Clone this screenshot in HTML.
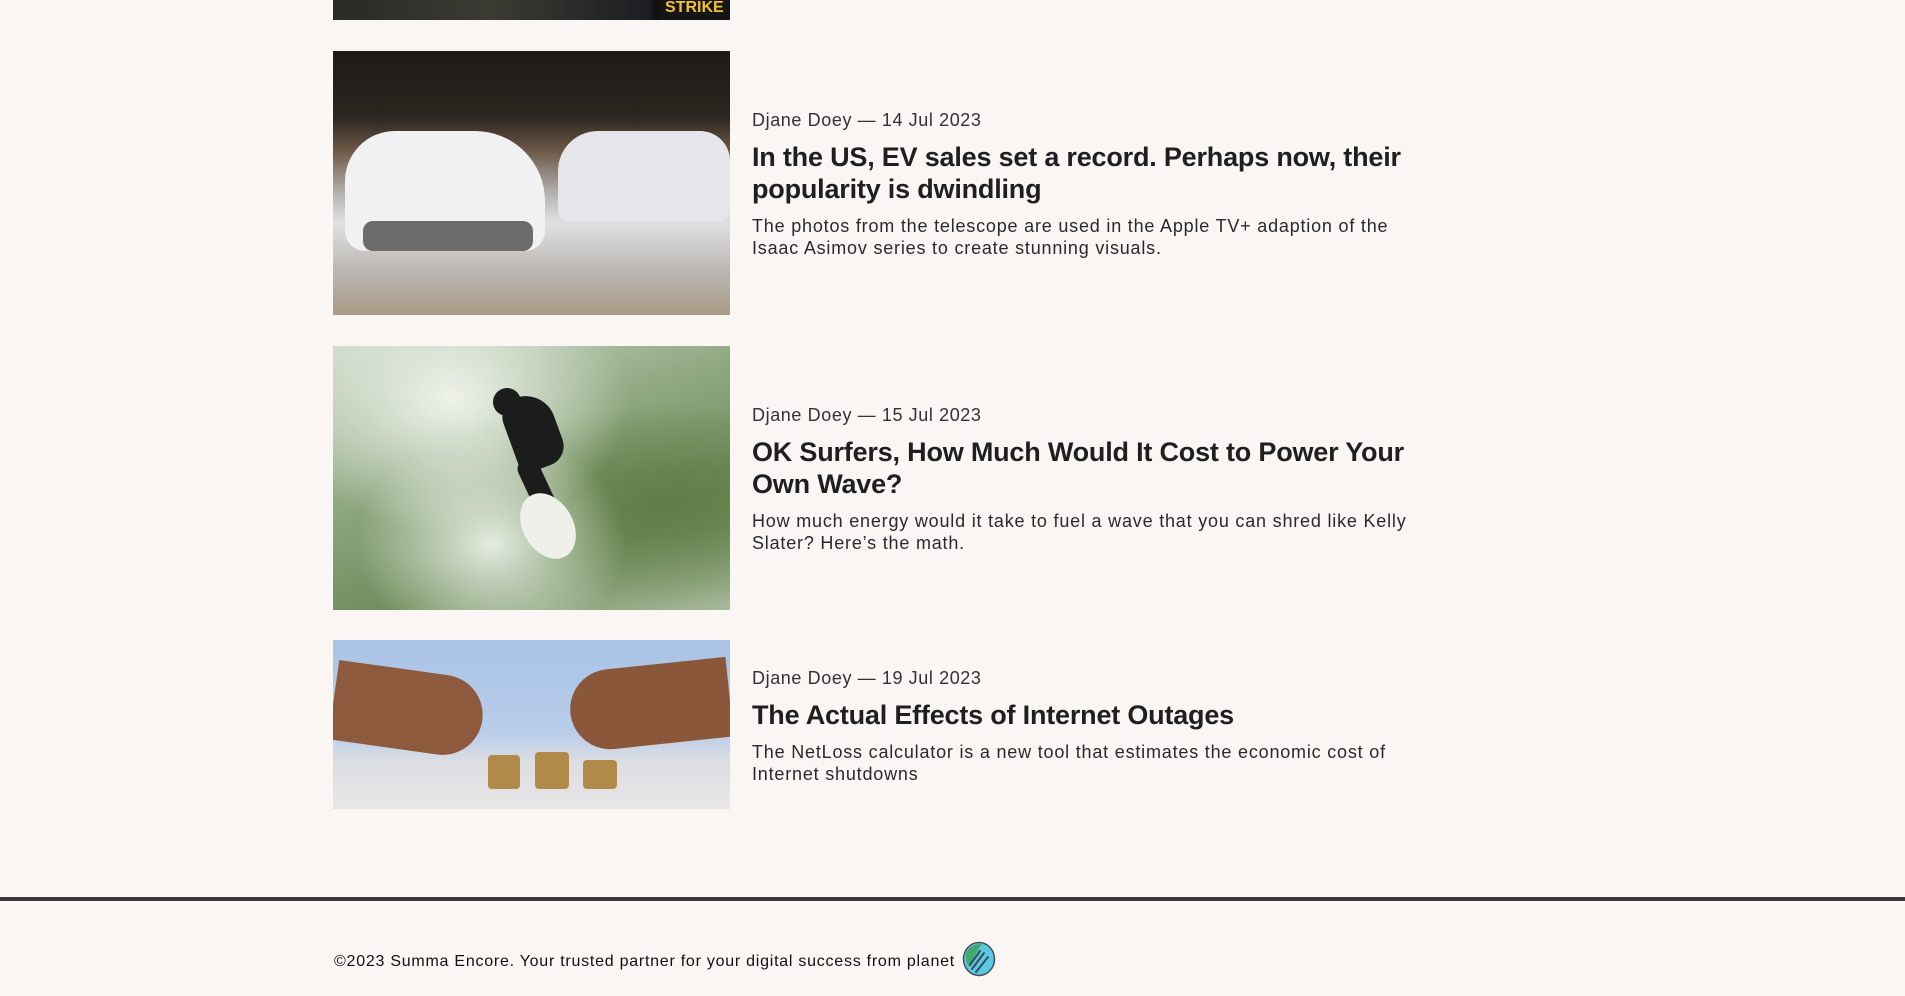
<!DOCTYPE html>
<html><head><meta charset="utf-8"><style>
html,body{margin:0;padding:0;background:#f9f6f3;width:1905px;height:996px;overflow:hidden;font-family:"Liberation Sans",sans-serif;color:#222;}
.img{position:absolute;left:333px;width:397px;overflow:hidden;}
.txt{position:absolute;left:752px;width:680px;}
.meta{font-size:18px;color:#333;line-height:22px;letter-spacing:0.6px;}
.t{font-size:27px;font-weight:bold;line-height:32px;color:#1f1f22;margin-top:10px;letter-spacing:-0.2px;}
.d{font-size:18px;line-height:22px;color:#2a2a2a;margin-top:10px;letter-spacing:0.8px;width:665px;}
</style></head><body>
<div class="img" style="top:0;height:20px;background:linear-gradient(90deg,#2a2a26 0%,#3b3a33 40%,#1c1d22 80%,#111 81%,#111 100%);"></div>
<div style="position:absolute;left:660px;top:0;width:70px;height:20px;background:#151515;color:#f2c230;font-weight:bold;font-size:16px;line-height:16px;padding-left:5px;box-sizing:border-box;">STRIKE</div>

<div class="img" style="top:51px;height:264px;background:linear-gradient(180deg,#1d1a18 0%,#2c2520 25%,#6e5a48 38%,#b9b7b5 55%,#e0e0e2 65%,#b7b3ad 85%,#a99a86 100%);">
<div style="position:absolute;left:12px;top:80px;width:200px;height:120px;background:#f1f1f3;border-radius:50px 70px 20px 20px;"></div>
<div style="position:absolute;left:225px;top:80px;width:172px;height:90px;background:#e6e6ea;border-radius:40px 30px 10px 10px;"></div>
<div style="position:absolute;left:30px;top:170px;width:170px;height:30px;background:#333;border-radius:10px;opacity:.7"></div>
</div>
<div class="txt" style="top:109px;"><div class="meta">Djane Doey — 14 Jul 2023</div><div class="t">In the US, EV sales set a record. Perhaps now, their popularity is dwindling</div><div class="d">The photos from the telescope are used in the Apple TV+ adaption of the Isaac Asimov series to create stunning visuals.</div></div>

<div class="img" style="top:346px;height:264px;background:radial-gradient(ellipse at 30% 20%,#eef2ea 0%,rgba(220,230,215,0) 45%),radial-gradient(ellipse at 40% 75%,#e4ebe0 0%,rgba(220,230,215,0) 40%),radial-gradient(ellipse at 85% 60%,#5f7d45 0%,rgba(95,125,69,0) 45%),linear-gradient(160deg,#c9d6c4 0%,#8da77f 40%,#6f8d5c 70%,#a7b99a 100%);">
<div style="position:absolute;left:160px;top:42px;width:28px;height:28px;background:#1a1d1c;border-radius:50%;"></div>
<div style="position:absolute;left:175px;top:48px;width:50px;height:75px;background:#1a1d1c;border-radius:20px 30px 20px 10px;transform:rotate(-20deg);"></div>
<div style="position:absolute;left:195px;top:110px;width:22px;height:70px;background:#1a1d1c;border-radius:10px;transform:rotate(-25deg);"></div>
<div style="position:absolute;left:190px;top:145px;width:50px;height:70px;background:#f0f0ea;border-radius:50%;transform:rotate(-30deg);"></div>
</div>
<div class="txt" style="top:404px;"><div class="meta">Djane Doey — 15 Jul 2023</div><div class="t">OK Surfers, How Much Would It Cost to Power Your Own Wave?</div><div class="d">How much energy would it take to fuel a wave that you can shred like Kelly Slater? Here’s the math.</div></div>

<div class="img" style="top:640px;height:169px;background:linear-gradient(180deg,#a9c3e6 0%,#b8cde9 55%,#dcdde2 72%,#e8e6e6 100%);">
<div style="position:absolute;left:0;top:30px;width:150px;height:80px;background:#8e5a3e;border-radius:0 60px 60px 0;transform:rotate(8deg);"></div>
<div style="position:absolute;left:237px;top:25px;width:160px;height:80px;background:#8a573b;border-radius:60px 0 0 60px;transform:rotate(-6deg);"></div>
<div style="position:absolute;left:155px;top:115px;width:32px;height:34px;background:#b08a48;border-radius:4px;"></div>
<div style="position:absolute;left:202px;top:112px;width:34px;height:37px;background:#b08a48;border-radius:4px;"></div>
<div style="position:absolute;left:250px;top:120px;width:34px;height:29px;background:#b08a48;border-radius:4px;"></div>
</div>
<div class="txt" style="top:667px;"><div class="meta">Djane Doey — 19 Jul 2023</div><div class="t">The Actual Effects of Internet Outages</div><div class="d">The NetLoss calculator is a new tool that estimates the economic cost of Internet shutdowns</div></div>

<div style="position:absolute;left:0;top:897px;width:1905px;height:4px;background:#3a383d;"></div>
<div style="position:absolute;left:334px;top:947px;font-size:16px;line-height:22px;color:#111;letter-spacing:0.75px;white-space:nowrap;">©2023 Summa Encore. Your trusted partner for your digital success from planet <svg style="vertical-align:middle;margin-left:2px;margin-top:-6px" width="34" height="36" viewBox="0 0 34 36"><ellipse cx="17" cy="18" rx="15.5" ry="16.5" fill="#5bc8e6" stroke="#4a4d55" stroke-width="1.5"/><path d="M4 12 Q10 2 20 3 Q14 10 8 26 Q3 22 4 12Z" fill="#3faa6b"/><path d="M8 24 L18 10 M10 28 L22 12 M14 31 L26 16" stroke="#3b4d5a" stroke-width="2" fill="none" stroke-linecap="round"/></svg></div>
</body></html>
